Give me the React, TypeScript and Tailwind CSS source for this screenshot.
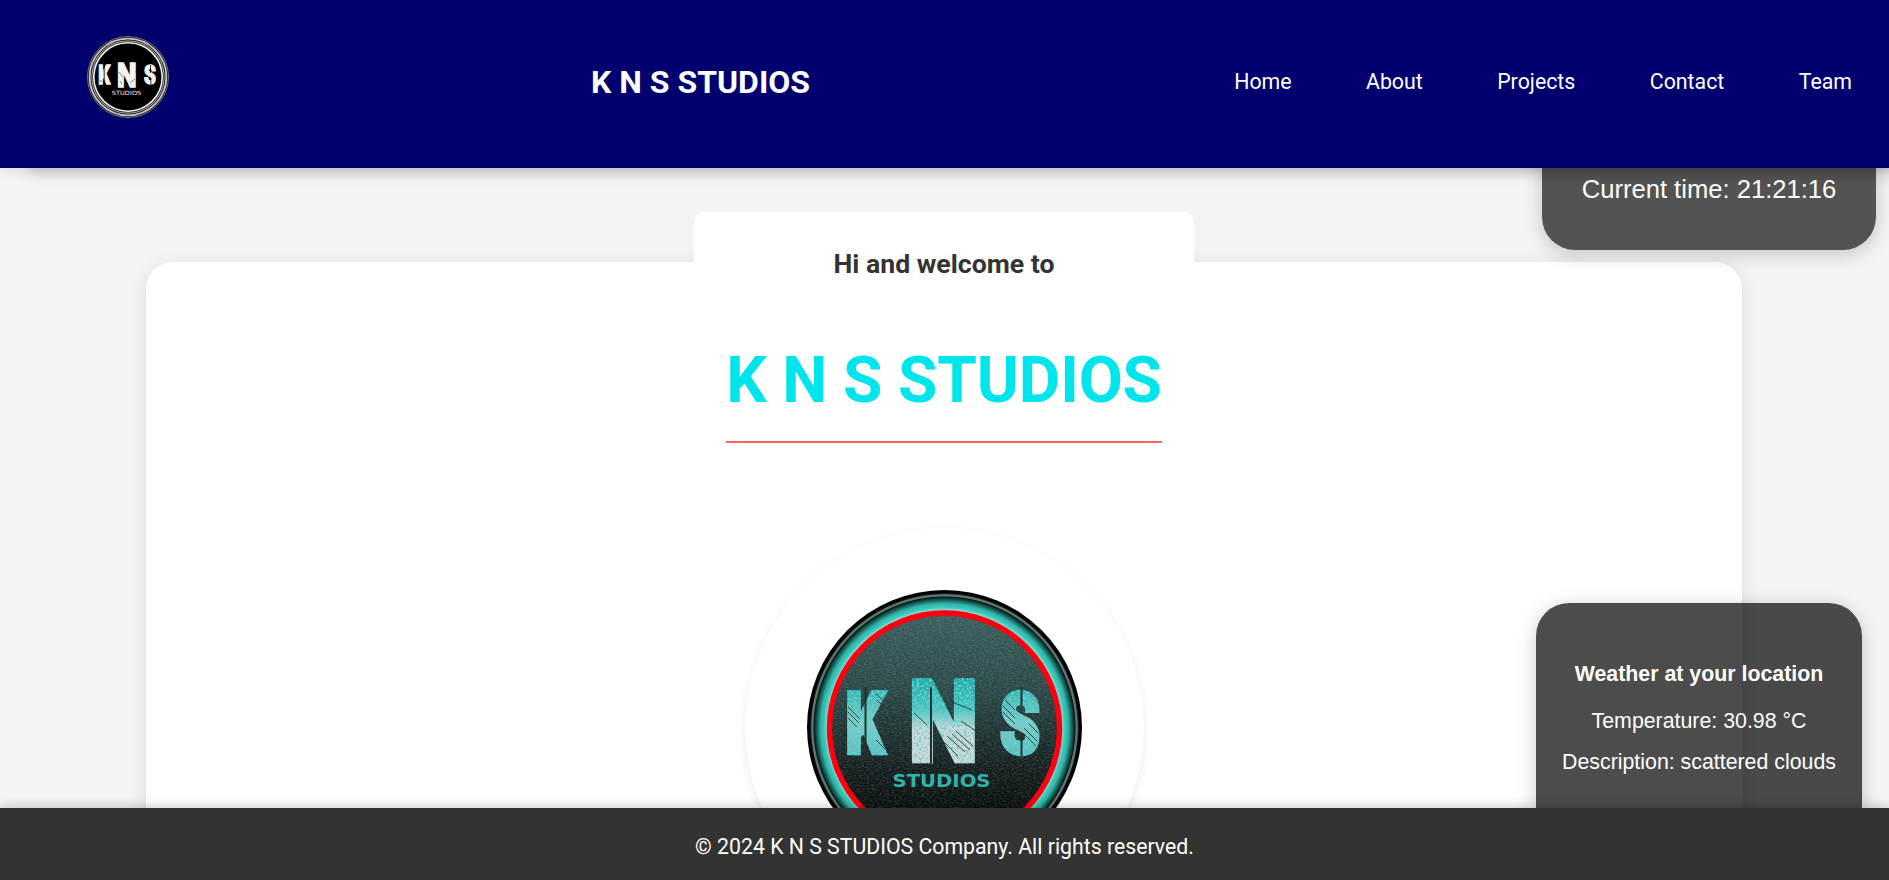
import React from "react";

function SmallLogo() {
  return (
    <svg viewBox="0 0 82 82" className="h-[82px] w-[82px] shrink-0">
      <circle cx="41" cy="41" r="40.5" fill="#111" stroke="#77776f" strokeWidth="1" />
      <circle cx="41" cy="41" r="38.4" fill="none" stroke="#c4c4c4" strokeWidth="1.8" />
      <circle cx="41" cy="41" r="36.2" fill="none" stroke="#999" strokeWidth="1.2" />
      <circle cx="41" cy="41" r="34.2" fill="#000" stroke="#f2f2f2" strokeWidth="1.6" />
      <g fill="#f4f4f4" stroke="#f4f4f4" strokeWidth="1.4" fontFamily="Roboto, sans-serif" fontWeight="900">
        <text transform="translate(11.2 48.4) scale(.7 1)" fontSize="26.5">K</text>
        <text transform="translate(30 51) scale(.82 1)" fontSize="34">N</text>
        <text transform="translate(57 48.2) scale(.76 1)" fontSize="25">S</text>
      </g>
      <path d="M17.200 29v20.500M63.500 29v8M63.800 43v7" stroke="#000" strokeWidth=".8" />
      <path d="M32 36l4 5M43 47l5-4M12.500 44l3 2M58 38l3 2M33 45l2 3" stroke="#555" strokeWidth=".7" />
      <text x="24.800" y="58.800" fontSize="5.800" textLength="29.500" lengthAdjust="spacingAndGlyphs" fill="#eee" fontFamily="'DejaVu Sans', sans-serif">STUDIOS</text>
    </svg>
  );
}

function LargeLogo() {
  return (
    <svg viewBox="0 0 275 275" className="h-[275px] w-[275px]">
      <defs>
        <radialGradient id="ring" gradientUnits="userSpaceOnUse" cx="137.5" cy="137.5" r="137.5">
          <stop offset=".855" stopColor="#8fd8d0" />
          <stop offset=".875" stopColor="#3bcabd" />
          <stop offset=".9" stopColor="#30b5a9" />
          <stop offset=".93" stopColor="#155750" />
          <stop offset=".95" stopColor="#0a1716" />
          <stop offset=".956" stopColor="#5b7573" />
          <stop offset=".966" stopColor="#607573" />
          <stop offset=".972" stopColor="#1c2424" />
          <stop offset=".98" stopColor="#000" />
          <stop offset="1" stopColor="#000" />
        </radialGradient>
        <linearGradient id="disc" x1="0" y1="0" x2="0" y2="1">
          <stop offset="0" stopColor="#3a5f5d" />
          <stop offset=".35" stopColor="#284645" />
          <stop offset=".7" stopColor="#121b1b" />
          <stop offset="1" stopColor="#000" />
        </linearGradient>
        <linearGradient id="metal" x1="0" y1="0" x2="0" y2="1">
          <stop offset=".15" stopColor="#1fa8a6" />
          <stop offset=".4" stopColor="#4cc0bc" />
          <stop offset=".55" stopColor="#cfd6d7" />
          <stop offset="1" stopColor="#dcd6d8" />
        </linearGradient>
        <linearGradient id="teal" x1="0" y1="0" x2="0" y2="1">
          <stop offset=".1" stopColor="#2ab0ab" />
          <stop offset=".5" stopColor="#84c8c5" />
          <stop offset="1" stopColor="#48bab5" />
        </linearGradient>
        <filter id="grain" x="0" y="0" width="1" height="1">
          <feTurbulence type="fractalNoise" baseFrequency=".4 .7" numOctaves="2" seed="4" />
          <feColorMatrix values="0 0 0 0 .6  0 0 0 0 .7  0 0 0 0 .69  1.500 0 0 0 -.6" />
          <feComposite in2="SourceGraphic" operator="in" />
        </filter>
        <filter id="worn" x="-.05" y="-.05" width="1.1" height="1.1">
          <feTurbulence type="fractalNoise" baseFrequency=".4" numOctaves="3" seed="9" result="n" />
          <feColorMatrix in="n" values="0 0 0 0 .1  0 0 0 0 .68  0 0 0 0 .66  5 0 0 0 -2.400" result="c" />
          <feComposite in="c" in2="SourceGraphic" operator="in" result="t" />
          <feMerge>
            <feMergeNode in="SourceGraphic" />
            <feMergeNode in="t" />
          </feMerge>
        </filter>
      </defs>
      <circle cx="137.5" cy="137.5" r="137.5" fill="url(#ring)" />
      <circle cx="137.500" cy="138" r="115" fill="url(#disc)" stroke="#ff0010" strokeWidth="5.500" />
      <circle cx="137.500" cy="138" r="112" fill="#fff" filter="url(#grain)" opacity=".3" />
      <g fontFamily="Roboto, sans-serif" fontWeight="900" strokeWidth="4.500" filter="url(#worn)">
        <text transform="translate(38.500 162.500) scale(.71 1)" fontSize="86" fill="url(#teal)" stroke="url(#teal)">K</text>
        <text transform="translate(101.500 170.500) scale(.87 1)" fontSize="114" fill="url(#metal)" stroke="url(#metal)">N</text>
        <text transform="translate(193 162.500) scale(.75 1)" fontSize="85" fill="url(#teal)" stroke="url(#teal)">S</text>
      </g>
      <path d="M58.500 97v69M214.500 97v19M214.500 144v22M124 97v76" stroke="#1c3231" strokeWidth="2" fill="none" />
      <path d="M41 117l12 12M41 122l11 11M41 128l9 9M69 104l9 8M70 110l8 8M69 150l9 9M107 123l13 12M145 112l20 8M154 131l15 10M140 146l18 16M145 144l18 16M149 141l17 15M137 152l14 14M196 116l12 12M196 122l12 12M198 110l10 10M217 138l13 13M217 144l12 12M222 134l9 9" stroke="#182c2b" strokeWidth="1" fill="none" opacity=".8" />
      <text x="85.500" y="197" fontSize="18.500" textLength="98" lengthAdjust="spacingAndGlyphs" fill="#2fb3a9" fontFamily="'DejaVu Sans', sans-serif" fontWeight="700">STUDIOS</text>
    </svg>
  );
}

const links = ["Home", "About", "Projects", "Contact", "Team"];

export default function App() {
  return (
    <div className="relative flex h-[880px] w-full flex-col overflow-hidden bg-[#f4f4f4] font-[Roboto,sans-serif]">
      <header className="relative z-20 flex h-[168px] shrink-0 items-start bg-[#00006f] text-white shadow-[0_4px_10px_rgba(0,0,0,0.08),28px_4px_14px_rgba(0,0,0,0.2)]">
        <div className="w-[591px] shrink-0 pt-9 pl-[87px]">
          <SmallLogo />
        </div>
        <h1 className="pt-[63px] text-[32px] leading-[38px] font-bold whitespace-nowrap">K N S STUDIOS</h1>
        <nav className="ml-auto flex gap-[74.4px] pt-[69px] pr-[37px] text-[21.33px] leading-[25px]">
          {links.map((link) => (
            <a key={link} href="#">{link}</a>
          ))}
        </nav>
      </header>

      <main className="flex min-h-0 flex-1 justify-center pt-[94px] pr-px">
        <section className="flex h-[900px] w-[1596px] shrink-0 flex-col items-center rounded-[27px] bg-white shadow-[0_4px_20px_rgba(0,0,0,0.1)]">
          <div className="-mt-[50px] h-[104px] w-[500px] rounded-[10px] bg-white pt-9 text-center text-[26.67px] leading-8 font-bold text-[#333]">
            Hi and welcome to
          </div>
          <h2 className="mt-[27px] h-[100px] border-b-2 border-[#ff6264] text-[64px] leading-[75px] font-bold tracking-[-0.18px] whitespace-nowrap text-[#00e4ec]">
            K N S STUDIOS
          </h2>
          <div className="mt-[85px] ml-px flex h-[399px] w-[399px] shrink-0 items-center justify-center rounded-full bg-white shadow-[0_4px_8px_rgba(0,0,0,0.08)]">
            <LargeLogo />
          </div>
        </section>
      </main>

      <aside className="absolute top-[126px] right-[13px] z-10 flex h-[124px] w-[334px] items-center justify-center rounded-[33px] bg-black/66 pt-0.5 font-['Liberation_Sans',sans-serif] text-[25.6px] text-white shadow-[0_4px_20px_rgba(0,0,0,0.2)]">
        Current time: 21:21:16
      </aside>

      <aside className="absolute top-[603px] right-[27px] z-10 h-[260px] w-[326px] rounded-[33px] bg-black/70 pt-[59px] text-center font-['Liberation_Sans',sans-serif] text-[21.33px] leading-6 text-white shadow-[0_4px_20px_rgba(0,0,0,0.2)]">
        <h3 className="font-bold">Weather at your location</h3>
        <p className="mt-[23px]">Temperature: 30.98 °C</p>
        <p className="mt-[17px]">Description: scattered clouds</p>
      </aside>

      <footer className="relative z-20 flex h-[72px] shrink-0 items-center justify-center bg-[#333] pt-1.5 text-[21.28px] text-white shadow-[0_-2px_10px_rgba(0,0,0,0.2)]">
        © 2024 K N S STUDIOS Company. All rights reserved.
      </footer>
    </div>
  );
}
